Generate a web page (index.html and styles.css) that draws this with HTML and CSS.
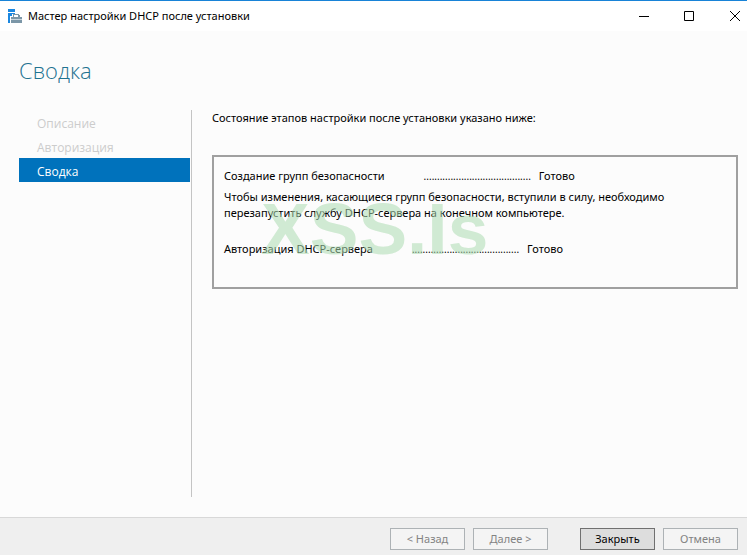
FILE: index.html
```html
<!DOCTYPE html>
<html lang="ru">
  <head>
    <meta charset="UTF-8" />
    <meta name="viewport" content="width=device-width, initial-scale=1.0" />
    <title>Мастер настройки DHCP после установки</title>
    <link rel="stylesheet" href="styles.css">
  </head>
  <body>
    <div class="titlebar">
      <svg class="app-icon" width="15" height="15" viewBox="0 0 15 15" shape-rendering="crispEdges">
        <path fill="#1b87e0" d="M0 0h7v3H0zM0 4h7v1H4v2H2v7H0z" />
        <path fill="#7c97a8" d="M5 5h6v1h1v2h2v2H3V8h2V5zM3 11h11v3H3z" />
        <path fill="#ffffff" d="M6 6h4v2H6z" />
        <path fill="#c9d5dc" d="M3 10h11v1H3z" />
      </svg>
      <span class="title">Мастер настройки DHCP после установки</span>
      <div class="window-controls">
        <button class="window-button" aria-label="Свернуть">
          <svg width="10" height="10"><path d="M0 5.5h10" /></svg>
        </button>
        <button class="window-button" aria-label="Развернуть">
          <svg width="10" height="10"><path d="M.5.5h9v9h-9z" /></svg>
        </button>
        <button class="window-button" aria-label="Закрыть окно">
          <svg width="10" height="10"><path d="M0 0l10 10M10 0L0 10" /></svg>
        </button>
      </div>
    </div>

    <h1 class="heading">Сводка</h1>

    <div class="main">
      <ul class="steps">
        <li class="step">Описание</li>
        <li class="step">Авторизация</li>
        <li class="step active">Сводка</li>
      </ul>
      <div class="content">
        <p class="intro">Состояние этапов настройки после установки указано ниже:</p>
        <div class="panel">
          <div class="result">
            <span>Создание групп безопасности</span>
            <span class="dots">........................................</span>
            <span>Готово</span>
          </div>
          <p class="note">Чтобы изменения, касающиеся групп безопасности, вступили в силу, необходимо перезапустить службу DHCP-сервера на конечном компьютере.</p>
          <div class="result">
            <span>Авторизация DHCP-сервера</span>
            <span class="dots">........................................</span>
            <span>Готово</span>
          </div>
          <div class="watermark">XSS.Is</div>
        </div>
      </div>
    </div>

    <div class="footer">
      <button class="button" disabled>&lt; Назад</button>
      <button class="button" disabled>Далее &gt;</button>
      <button class="button primary">Закрыть</button>
      <button class="button" disabled>Отмена</button>
    </div>
  </body>
</html>
```
FILE: styles.css
```css
* {
  box-sizing: border-box;
}
body {
  display: flex;
  flex-direction: column;
  min-height: 100vh;
  margin: 0;
  background-color: #fcfcfc;
  color: #000000;
  font-family: "Noto Sans", "Open Sans", sans-serif;
  font-size: 11px;
  line-height: 16px;
}
.titlebar {
  display: flex;
  align-items: center;
  height: 31px;
  padding-left: 8px;
  border-top: 1px solid #1883d7;
  background-color: #ffffff;
}
.title {
  margin-left: 5px;
}
.window-controls {
  display: flex;
  margin-left: auto;
}
.window-button {
  display: flex;
  align-items: center;
  justify-content: center;
  width: 45px;
  height: 30px;
  padding: 0;
  border: none;
  background: none;
}
.window-button:last-child {
  justify-content: flex-end;
  width: 36px;
  padding-right: 7px;
}
.window-button svg {
  fill: none;
  stroke: #000000;
}
.heading {
  margin: 24px 19px;
  color: #1f7391;
  font-family: "Open Sans", "Noto Sans", sans-serif;
  font-size: 22px;
  font-weight: 300;
  line-height: 31px;
}
.main {
  display: flex;
  flex: 1;
  padding: 0 9px 20px 19px;
}
.steps {
  width: 173px;
  margin: 0;
  padding: 0 1px 0 0;
  border-right: 1px solid #c4c4c4;
  font-family: "Open Sans", "Noto Sans", sans-serif;
  font-size: 12px;
  list-style: none;
}
.step {
  padding: 6px 18px 2px;
  color: #cccccc;
}
.active {
  background-color: #0072bc;
  color: #ffffff;
}
.content {
  flex: 1;
  margin-left: 20px;
}
.intro {
  margin: 0 0 29px;
}
.panel {
  position: relative;
  min-height: 134px;
  padding: 11px 10px;
  border: 2px solid #a0a0a0;
}
.result {
  display: flex;
}
.dots {
  margin: 0 8px 0 39px;
  font-size: 10px;
}
.note {
  margin: 5px 0 20px;
}
.watermark {
  position: absolute;
  top: 30px;
  left: 47px;
  color: rgba(172, 219, 176, 0.55);
  font-family: "Liberation Sans", Arial, sans-serif;
  font-size: 73px;
  font-weight: bold;
  line-height: 83px;
}
.footer {
  display: flex;
  justify-content: flex-end;
  gap: 8px;
  padding: 10px 9px 5px;
  border-top: 1px solid #d8d8d8;
  background-color: #efefef;
}
.button {
  width: 75px;
  height: 22px;
  padding: 0;
  border: 1px solid #adb2b5;
  background-color: #f4f4f4;
  color: #838383;
  font: inherit;
}
.primary {
  margin-left: 24px;
  border-color: #707070;
  background-color: #dddddd;
  color: #000000;
}
```
